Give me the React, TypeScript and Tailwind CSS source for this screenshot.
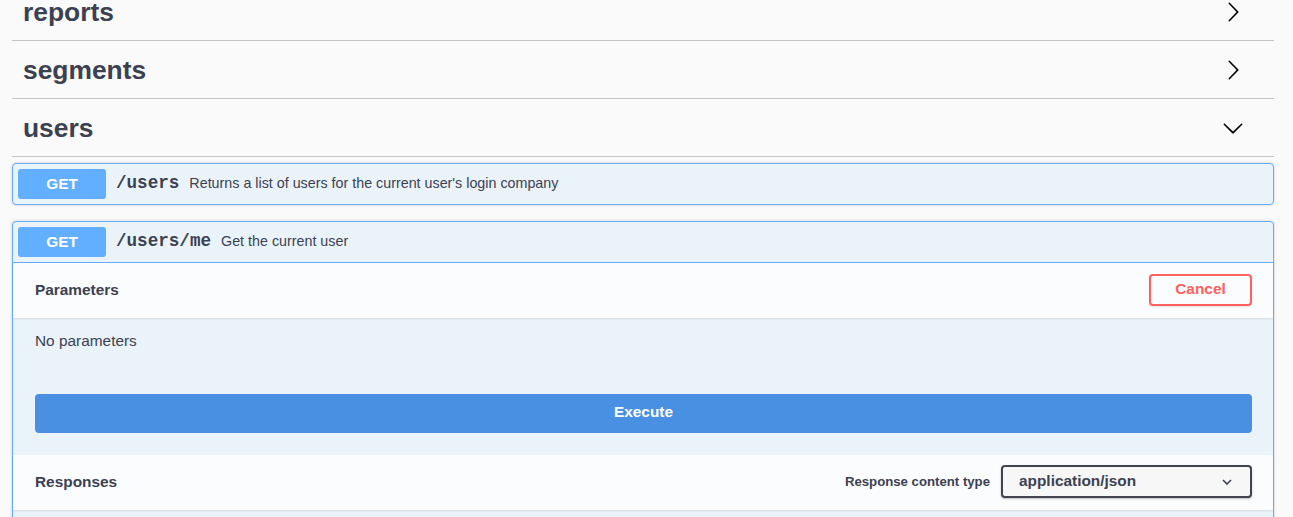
const sans = { fontFamily: '"Liberation Sans", Arial, sans-serif' }

interface Tag {
  name: string
  open?: boolean
}

const tags: Tag[] = [{ name: "reports" }, { name: "segments" }, { name: "users", open: true }]

function ArrowRight() {
  return (
    <svg width="22" height="22" viewBox="0 0 20 20" fill="#000">
      <path d="M13.25 10L6.109 2.58a.697.697 0 0 1 0-.979.68.68 0 0 1 .969 0l7.83 7.908a.697.697 0 0 1 0 .979l-7.83 7.908a.68.68 0 0 1-.969 0 .697.697 0 0 1 0-.979L13.25 10z" />
    </svg>
  )
}

function ArrowDown() {
  return (
    <svg width="22" height="22" viewBox="0 0 20 20" fill="#000">
      <path d="M17.418 6.109c.272-.268.709-.268.979 0s.271.701 0 .969l-7.908 7.83c-.27.268-.707.268-.979 0l-7.908-7.83c-.27-.268-.27-.701 0-.969.271-.268.709-.268.979 0L10 13.25l7.418-7.141z" />
    </svg>
  )
}

function Summary({ path, desc, divider }: { path: string; desc: string; divider?: boolean }) {
  return (
    <div className={`flex items-center p-[5px] ${divider ? "border-b border-[#61affe]" : ""}`}>
      <span className="w-[88px] h-[30px] pb-[1px] rounded-[3px] bg-[#61affe] text-white font-bold text-[15.4px] flex items-center justify-center shrink-0">
        GET
      </span>
      <span
        className="px-[10px] text-[17.6px] font-bold text-[#3b4151] leading-none"
        style={{ fontFamily: '"Liberation Mono", "Courier New", monospace' }}
      >
        {path}
      </span>
      <span className="text-[14.3px] text-[#3b4151] pb-[1px]">{desc}</span>
    </div>
  )
}

export default function App() {
  return (
    <div className="min-h-[517px] overflow-hidden bg-[#fafafa] pl-[12px] pr-[19px] text-[#3b4151]" style={sans}>
      <div className="-mt-[17px]">
        {tags.map((tag) => (
          <div
            key={tag.name}
            className="h-[58px] border-b border-[#c1c3c7] flex items-center justify-between pl-[11px] pr-[30px]"
          >
            <span className="text-[26.4px] font-bold pt-[3px]">{tag.name}</span>
            {tag.open ? <ArrowDown /> : <ArrowRight />}
          </div>
        ))}
      </div>

      <div className="mt-[6px] mb-[16px] border border-[#61affe] rounded-[4px] bg-[#ebf3fa] shadow-[0_0_3px_rgba(0,0,0,0.19)]">
        <Summary path="/users" desc="Returns a list of users for the current user's login company" />
      </div>

      <div className="border border-[#61affe] rounded-t-[4px] bg-[#ebf3fa] shadow-[0_0_3px_rgba(0,0,0,0.19)]">
        <Summary path="/users/me" desc="Get the current user" divider />

        <div className="h-[55px] pb-[2px] bg-[#fbfcfe] shadow-[0_1px_2px_rgba(0,0,0,0.1)] flex items-center justify-between pl-[22px] pr-[21px] relative">
          <span className="text-[15.4px] font-bold">Parameters</span>
          <button className="w-[103px] h-[32px] pb-[1px] border-2 border-[#ff6060] rounded-[4px] text-[#ff6060] font-bold text-[15.4px] shadow-[0_1px_2px_rgba(0,0,0,0.1)]">
            Cancel
          </button>
        </div>

        <div className="pt-[14px] pb-[22px] pl-[22px] pr-[21px]">
          <p className="text-[15.4px] leading-[17px]">No parameters</p>
          <button className="mt-[45px] w-full h-[39px] pb-[3px] rounded-[4px] bg-[#4990e2] text-white font-bold text-[15.4px]">
            Execute
          </button>
        </div>

        <div className="h-[55px] pb-[2px] bg-[#fbfcfe] shadow-[0_1px_2px_rgba(0,0,0,0.1)] flex items-center justify-between pl-[22px] pr-[21px] relative">
          <span className="text-[15.4px] font-bold">Responses</span>
          <div className="flex items-center gap-[11px]">
            <span className="text-[13.2px] font-bold">Response content type</span>
            <div className="w-[251px] h-[33px] border-2 border-[#41444e] rounded-[4px] bg-[#f7f7f7] shadow-[0_1px_2px_rgba(0,0,0,0.25)] flex items-center justify-between pl-[16px] pr-[18px]">
              <span className="text-[15.4px] font-bold pb-[1px]">application/json</span>
              <svg width="10" height="6" viewBox="0 0 10 6" fill="none" stroke="#3b4151" strokeWidth="1.6">
                <path d="M1 1l4 4 4-4" />
              </svg>
            </div>
          </div>
        </div>

        <div className="h-[60px]" />
      </div>
    </div>
  )
}
